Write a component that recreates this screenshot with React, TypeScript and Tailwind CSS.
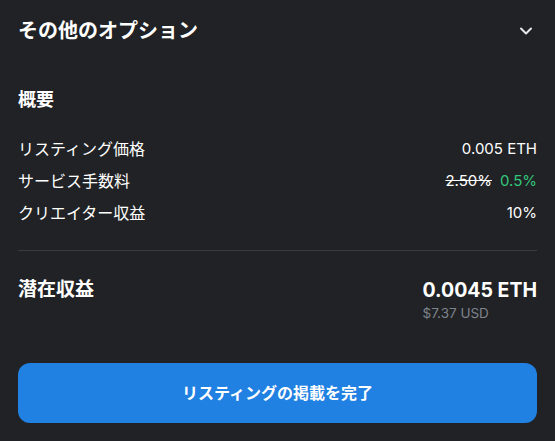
import React from "react";

const font = { fontFamily: "Inter, 'Noto Sans CJK JP', sans-serif" };

function Row({ label, children }: { label: string; children: React.ReactNode }) {
  return (
    <div className="flex h-8 items-center justify-between">
      <span className="text-[16px] text-white">{label}</span>
      <div className="flex items-center gap-2 text-[15px] text-white">{children}</div>
    </div>
  );
}

export default function App() {
  return (
    <div className="min-h-[441px] w-[555px] bg-[#202225] px-[18px] text-white" style={font}>
      {/* header */}
      <div className="flex h-[62px] items-center justify-between">
        <h2 className="text-[20px] font-bold leading-none">その他のオプション</h2>
        <svg width="14" height="14" viewBox="0 0 14 14" fill="none" className="mr-[4px]">
          <path d="M2 4.5 L7 9.5 L12 4.5" stroke="#e5e8eb" strokeWidth="2" strokeLinecap="round" strokeLinejoin="round" />
        </svg>
      </div>

      {/* summary */}
      <h3 className="mt-[26px] text-[18px] font-bold leading-6">概要</h3>
      <div className="mt-[21px] flex flex-col">
        <Row label="リスティング価格">
          <span>0.005 ETH</span>
        </Row>
        <Row label="サービス手数料">
          <span className="line-through">2.50%</span>
          <span className="text-[#34c77b]">0.5%</span>
        </Row>
        <Row label="クリエイター収益">
          <span>10%</span>
        </Row>
      </div>

      <div className="mt-[21px] h-px bg-[#393b40]" />

      {/* potential earnings */}
      <div className="mt-[25px] flex items-start justify-between">
        <span className="text-[19px] font-bold leading-7">潜在収益</span>
        <div className="flex flex-col whitespace-nowrap">
          <span className="text-[19.5px] font-bold leading-7">0.0045 ETH</span>
          <span className="text-[13.5px] leading-[18px] text-[#7f848c]">$7.37 USD</span>
        </div>
      </div>

      <button className="mt-[41px] flex h-[60px] w-full items-center justify-center rounded-xl bg-[#2081e2] text-[16px] font-bold text-white">
        リスティングの掲載を完了
      </button>
    </div>
  );
}
